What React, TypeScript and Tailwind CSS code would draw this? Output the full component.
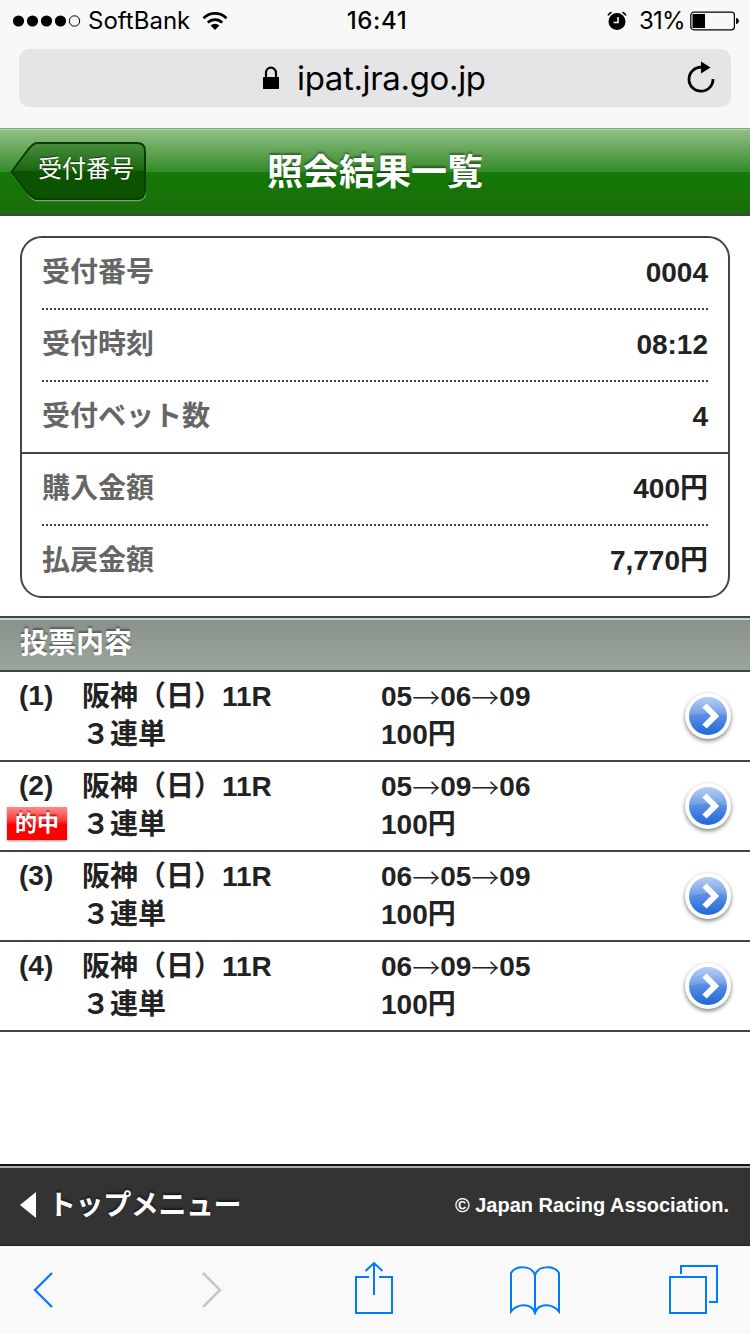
const JP = `font-['Liberation_Sans','Noto_Sans_CJK_JP',sans-serif]`

const summary = [
  { label: '受付番号', value: '0004', line: 'border-b-2 border-dotted border-[#444]' },
  { label: '受付時刻', value: '08:12', line: 'border-b-2 border-dotted border-[#444]' },
  { label: '受付ベット数', value: '4', line: '' },
  { label: '購入金額', value: '400円', line: 'border-b-2 border-dotted border-[#444]' },
  { label: '払戻金額', value: '7,770円', line: '' },
]

const bets = [
  { no: 1, horses: ['05', '06', '09'], hit: false },
  { no: 2, horses: ['05', '09', '06'], hit: true },
  { no: 3, horses: ['06', '05', '09'], hit: false },
  { no: 4, horses: ['06', '09', '05'], hit: false },
]

function StatusBar() {
  return (
    <div className="grid h-[41px] grid-cols-3 items-center text-2xl leading-[41px] text-black">
      <div className="flex items-center pl-3">
        <svg width="70" height="14" viewBox="0 0 70 14">
          <circle cx="6.5" cy="7" r="5.6" />
          <circle cx="20.5" cy="7" r="5.6" />
          <circle cx="34.5" cy="7" r="5.6" />
          <circle cx="48.5" cy="7" r="5.6" />
          <circle cx="62.5" cy="7" r="5.2" fill="none" stroke="#000" />
        </svg>
        <span className="ml-1.5 w-[102px] whitespace-nowrap">SoftBank</span>
        <svg className="ml-3" width="26" height="20" viewBox="0 0 26 20" fill="none" stroke="#000">
          <path d="M1.5 7.2a16.3 16.3 0 0 1 23 0" strokeWidth="2.8" />
          <path d="M5.8 11.6a10.2 10.2 0 0 1 14.4 0" strokeWidth="2.6" />
          <path d="M8.6 14.6a6.2 6.2 0 0 1 8.8 0L13 19z" fill="#000" stroke="none" />
        </svg>
      </div>
      <div className="pl-1 text-center font-medium tracking-[0.6px]">16:41</div>
      <div className="flex items-center justify-end pr-[11px]">
        <svg width="20" height="20" viewBox="0 0 20 20">
          <circle cx="10" cy="10.500" r="8.5" />
          <path d="M1 4.5A7 7 0 0 1 4.5 1.2M15.5 1.2A7 7 0 0 1 19 4.5" fill="none" stroke="#000" strokeWidth="1.6" />
          <path d="M11 6v5.500H6.5" fill="none" stroke="#f8f8f8" strokeWidth="1.6" />
        </svg>
        <span className="ml-3 w-[45px] whitespace-nowrap tracking-[-0.8px]">31%</span>
        <svg className="ml-[6px]" width="49" height="20" viewBox="0 0 49 20">
          <rect x=".8" y="1.2" width="43.6" height="17.6" rx="3" fill="none" stroke="#000" strokeWidth="1.2" />
          <rect x="2.5" y="3" width="12.5" height="14" />
          <path d="M46 6.8q3 1 3 3.2t-3 3.2z" />
        </svg>
      </div>
    </div>
  )
}

function AddressBar() {
  return (
    <div className="mx-[19px] mt-2 flex h-[58px] items-center rounded-[11px] bg-[#e5e5e7]">
      <svg className="ml-[244px]" width="16" height="24" viewBox="0 0 16 24">
        <path d="M3 11V7a5 5.3 0 0 1 10 0v4" fill="none" stroke="#000" strokeWidth="2.2" />
        <rect x="0" y="11" width="16" height="12" rx=".6" />
      </svg>
      <span className="ml-[18px] w-[190px] whitespace-nowrap text-[33px] leading-[58px] tracking-[-0.35px] text-black">
        ipat.jra.go.jp
      </span>
      <svg className="mr-4 mb-[3px] ml-auto" width="28" height="32" viewBox="0 0 28 32">
        <path d="M14.5 6.2A12 12 0 1 0 26 18" fill="none" stroke="#000" strokeWidth="2.8" />
        <path d="M14 .5v12l9.5-6z" />
      </svg>
    </div>
  )
}

function TitleBar() {
  return (
    <div className="relative h-[88px] border-b-2 border-[#444] bg-[linear-gradient(to_bottom,#7fa777_0,#7fa777_1px,#b5d5ab_1px,#b5d5ab_2px,#8fc084_2px,#358a29_44px,#147a06_44px,#1b6c0b_86px)]">
      <h1 className="pt-0.5 text-center text-4xl leading-[86px] font-bold text-white [text-shadow:0_-2px_2px_rgba(0,0,0,0.4)]">
        照会結果一覧
      </h1>
      <div className="absolute top-3 left-2.5 h-[62px] w-[138px]">
        <svg className="absolute inset-0" width="138" height="62" viewBox="0 0 138 62">
          <defs>
            <linearGradient id="back" x1="0" y1="0" x2="0" y2="1">
              <stop offset="0" stopColor="#498e3c" />
              <stop offset=".5" stopColor="#19660d" />
              <stop offset=".5" stopColor="#0b5301" />
              <stop offset="1" stopColor="#0c5201" />
            </linearGradient>
          </defs>
          <path
            d="M1.5 33Q13 47 19 55Q23 60.500 27 60.500H127Q135.500 60.500 135.500 52"
            fill="none"
            stroke="#75ab6b"
            strokeWidth="1.5"
          />
          <path
            d="M1.5 32Q11 19 17 11Q23 3 27 3H127Q135 3 135 11V50Q135 59 127 59H27Q23 59 17 52Q10 43 1.500 32Z"
            fill="url(#back)"
            stroke="#083f00"
            strokeWidth="2"
          />
        </svg>
        <span className="absolute top-[13px] left-7 text-2xl leading-[32px] whitespace-nowrap text-white [text-shadow:0_-1px_1px_rgba(0,0,0,0.5)]">
          受付番号
        </span>
      </div>
    </div>
  )
}

function SummaryRow({ label, value, line }: { label: string; value: string; line: string }) {
  return (
    <div className={`mx-5 flex h-[72px] items-start justify-between ${line}`}>
      <span className="leading-[70px] font-bold text-[#666]">{label}</span>
      <span className="leading-[70px] font-bold">{value}</span>
    </div>
  )
}

function GoButton() {
  return (
    <svg width="60" height="60" viewBox="0 0 60 60" className="[filter:drop-shadow(0_2px_2px_rgba(0,0,0,0.5))]">
      <defs>
        <linearGradient id="go" x1="0" y1="0" x2="0" y2="1">
          <stop offset="0" stopColor="#8db3ec" />
          <stop offset="1" stopColor="#1f68d8" />
        </linearGradient>
        <linearGradient id="gloss" x1="0" y1="0" x2="0" y2="1">
          <stop offset="0" stopColor="#fff" stopOpacity=".35" />
          <stop offset="1" stopColor="#fff" stopOpacity=".1" />
        </linearGradient>
      </defs>
      <circle cx="30" cy="30" r="23" fill="#fff" />
      <circle cx="30" cy="30" r="19" fill="url(#go)" />
      <path d="M11 30a19 19 0 0 1 38 0Q39 26 30 27T11 30" fill="url(#gloss)" />
      <path d="M26.500 19.500L37 30L26.500 40.500" fill="none" stroke="#fff" strokeWidth="6" />
    </svg>
  )
}

function BetRow({ no, horses, hit }: { no: number; horses: string[]; hit: boolean }) {
  return (
    <div className="relative flex h-[90px] border-b-2 border-[#444] pt-[6px] leading-[38px] font-bold">
      <div className="w-[82px] pl-[19px] leading-[36px]">({no})</div>
      <div className="w-[299px] whitespace-nowrap">
        <div>阪神（日）11R</div>
        <div>３連単</div>
      </div>
      <div className="flex-1">
        <div className="flex">
          {horses.map((horse, i) => (
            <span key={horse} className="flex">
              {i > 0 && <span className="w-7 font-['Noto_Sans_CJK_JP',sans-serif] font-light">→</span>}
              {horse}
            </span>
          ))}
        </div>
        <div>100円</div>
      </div>
      <div className="-mt-5 mr-3 flex items-center pt-[14px]">
        <GoButton />
      </div>
      {hit && (
        <span className="absolute top-[45px] left-[7px] h-[33px] w-[60px] bg-[linear-gradient(to_bottom,#ff8a8a_0,#ff3c3c_13px,#ff0000_18px,#ff0000_100%)] text-center text-[22px] leading-[33px] text-white shadow-[0_1px_2px_rgba(0,0,0,0.4)] [text-shadow:0_-2px_1px_rgba(120,0,0,0.5)]">
          的中
        </span>
      )}
    </div>
  )
}

function Toolbar() {
  return (
    <div className="flex h-[88px] items-center bg-[#f9f9f9] pl-8">
      <svg width="22" height="36" viewBox="0 0 22 36" fill="none" stroke="#007aff" strokeWidth="2.3">
        <path d="M20 1L3 18L20 35" />
      </svg>
      <svg className="ml-[147px]" width="22" height="36" viewBox="0 0 22 36" fill="none" stroke="#c7c7c7" strokeWidth="2.6">
        <path d="M2 1L19 18L2 35" />
      </svg>
      <svg className="ml-[131px]" width="40" height="58" viewBox="0 0 40 58" fill="none" stroke="#007aff" strokeWidth="2">
        <path d="M15 16H2V52H38V16H25M20 34V2M11.500 10L20 2L28.500 10" />
      </svg>
      <svg className="ml-[115px]" width="52" height="50" viewBox="0 0 52 50" fill="none" stroke="#007aff" strokeWidth="2">
        <path d="M26 11C24 0 7 0 2 8V46.500C9 38 23 38 26 48C29 38 43 38 50 46.500V8C45 0 28 0 26 11V48" />
      </svg>
      <svg className="ml-[108px]" width="50" height="50" viewBox="0 0 50 50" fill="none" stroke="#007aff" strokeWidth="2">
        <path d="M1 12H37V48H1ZM12 9V1H48V37H40" />
      </svg>
    </div>
  )
}

export default function App() {
  return (
    <div className={`flex h-[1334px] w-[750px] flex-col overflow-hidden bg-white text-[28px] text-[#222] ${JP}`}>
      <header className="h-32 bg-[#f8f8f8] font-['Inter',sans-serif]">
        <StatusBar />
        <AddressBar />
      </header>
      <TitleBar />

      <section className="mx-5 mt-5 h-[362px] rounded-[22px] border-2 border-[#444]">
        {summary.slice(0, 3).map((row) => (
          <SummaryRow key={row.label} {...row} />
        ))}
        <div className="-mt-0.5 border-t-2 border-[#444]">
          {summary.slice(3).map((row) => (
            <SummaryRow key={row.label} {...row} />
          ))}
        </div>
      </section>

      <h2 className="mt-[18px] h-14 border-y-2 border-[#444] bg-[linear-gradient(to_bottom,#c9d3cd_0,#c9d3cd_2px,#89928b_2px,#9ba69f_100%)] pl-5 leading-[52px] font-bold text-white [text-shadow:0_-2px_2px_rgba(0,0,0,0.4)]">
        投票内容
      </h2>
      <section>
        {bets.map((bet) => (
          <BetRow key={bet.no} {...bet} />
        ))}
      </section>

      <footer className="mt-auto">
        <div className="flex h-[82px] items-center justify-between border-t-2 border-b border-t-[#111] border-b-[#222] bg-[linear-gradient(to_bottom,#aaa_0,#aaa_2px,#333_2px)] pr-[21px] pb-0.5 pl-5 text-white">
          <div className="flex items-center gap-3 [text-shadow:0_-2px_2px_rgba(0,0,0,0.5)]">
            <svg width="16" height="26" viewBox="0 0 16 26" fill="#fff">
              <path d="M16 0V26L0 13Z" />
            </svg>
            <span className="pt-0.5 font-bold tracking-[-0.4px]">トップメニュー</span>
          </div>
          <span className="text-xl font-bold">© Japan Racing Association.</span>
        </div>
        <Toolbar />
      </footer>
    </div>
  )
}
